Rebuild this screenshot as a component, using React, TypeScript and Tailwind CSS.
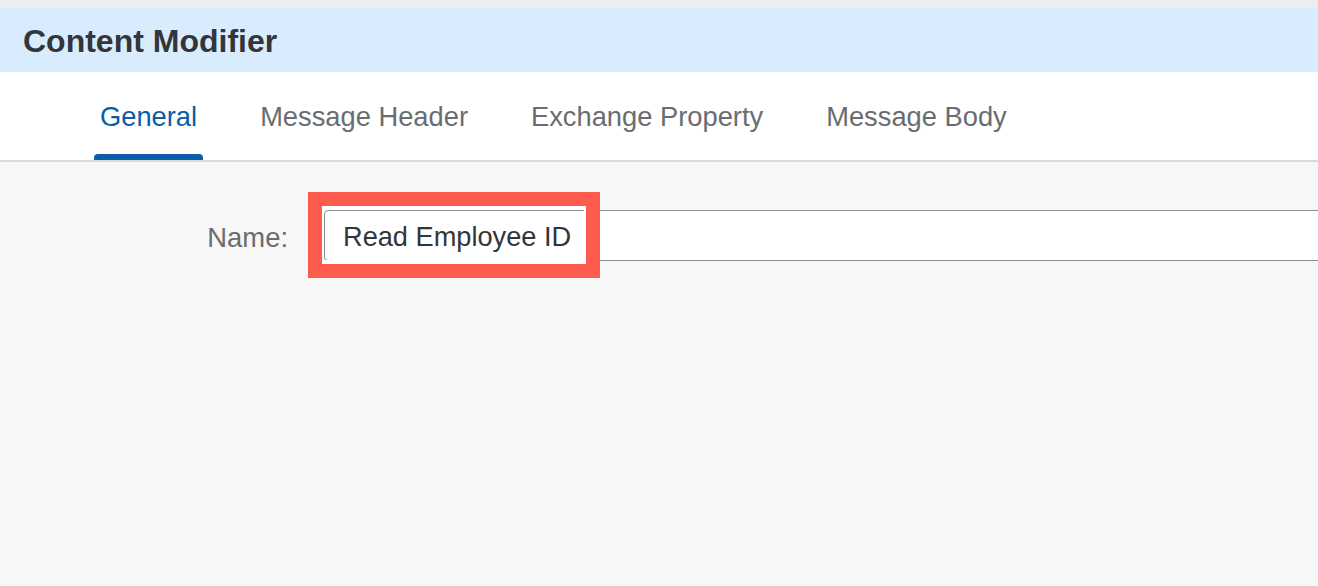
export default function App() {
  const tabs = ["General", "Message Header", "Exchange Property", "Message Body"];
  const active = 0;

  return (
    <div className="h-[586px] w-[1318px] overflow-hidden bg-[#f7f7f7] font-['Liberation_Sans',Arial,sans-serif]">
      {/* top strip */}
      <div className="h-[8px] bg-[#ededee]" />

      {/* title bar */}
      <div className="flex h-[64px] items-center bg-[#d8ecfd] pl-[23px]">
        <h1 className="pt-[2px] text-[32px] font-bold leading-none text-[#32363a]">Content Modifier</h1>
      </div>

      {/* tabs */}
      <div className="flex h-[90px] items-stretch border-b-2 border-[#d9d9d9] bg-white pl-[94px]">
        {tabs.map((t, i) => (
          <div
            key={t}
            className={
              i === active
                ? "relative flex items-center px-[6px] text-[27.3px] text-[#0a5ea8]"
                : "relative flex items-center px-[6px] text-[27.3px] text-[#6a6d70]"
            }
            style={{ marginRight: i < tabs.length - 1 ? 51 : 0 }}
          >
            <span className="pt-[2px]">{t}</span>
            {i === active && (
              <div className="absolute bottom-0 left-0 right-0 h-[6px] rounded-t-[4px] bg-[#0a5ea8]" />
            )}
          </div>
        ))}
      </div>

      {/* form */}
      <div className="flex items-center pt-[48px]">
        <label className="w-[288px] pt-[4px] text-right text-[27.4px] text-[#6a6d70]">Name:</label>
        <div className="relative ml-[36px] -mr-[8px] flex-1">
          <div className="flex h-[51px] items-center rounded-[4px] border border-[#89919a] bg-white pl-[18px] pt-[3px] text-[27.2px] text-[#32363a]">
            Read Employee ID
          </div>
          {/* highlight annotation */}
          <div className="absolute -left-[16px] -top-[18px] h-[86px] w-[292px] border-[14px] border-[#fe5b4f]">
            <div className="absolute inset-0 border-x-2 border-y-4 border-white" />
          </div>
        </div>
      </div>
    </div>
  );
}
